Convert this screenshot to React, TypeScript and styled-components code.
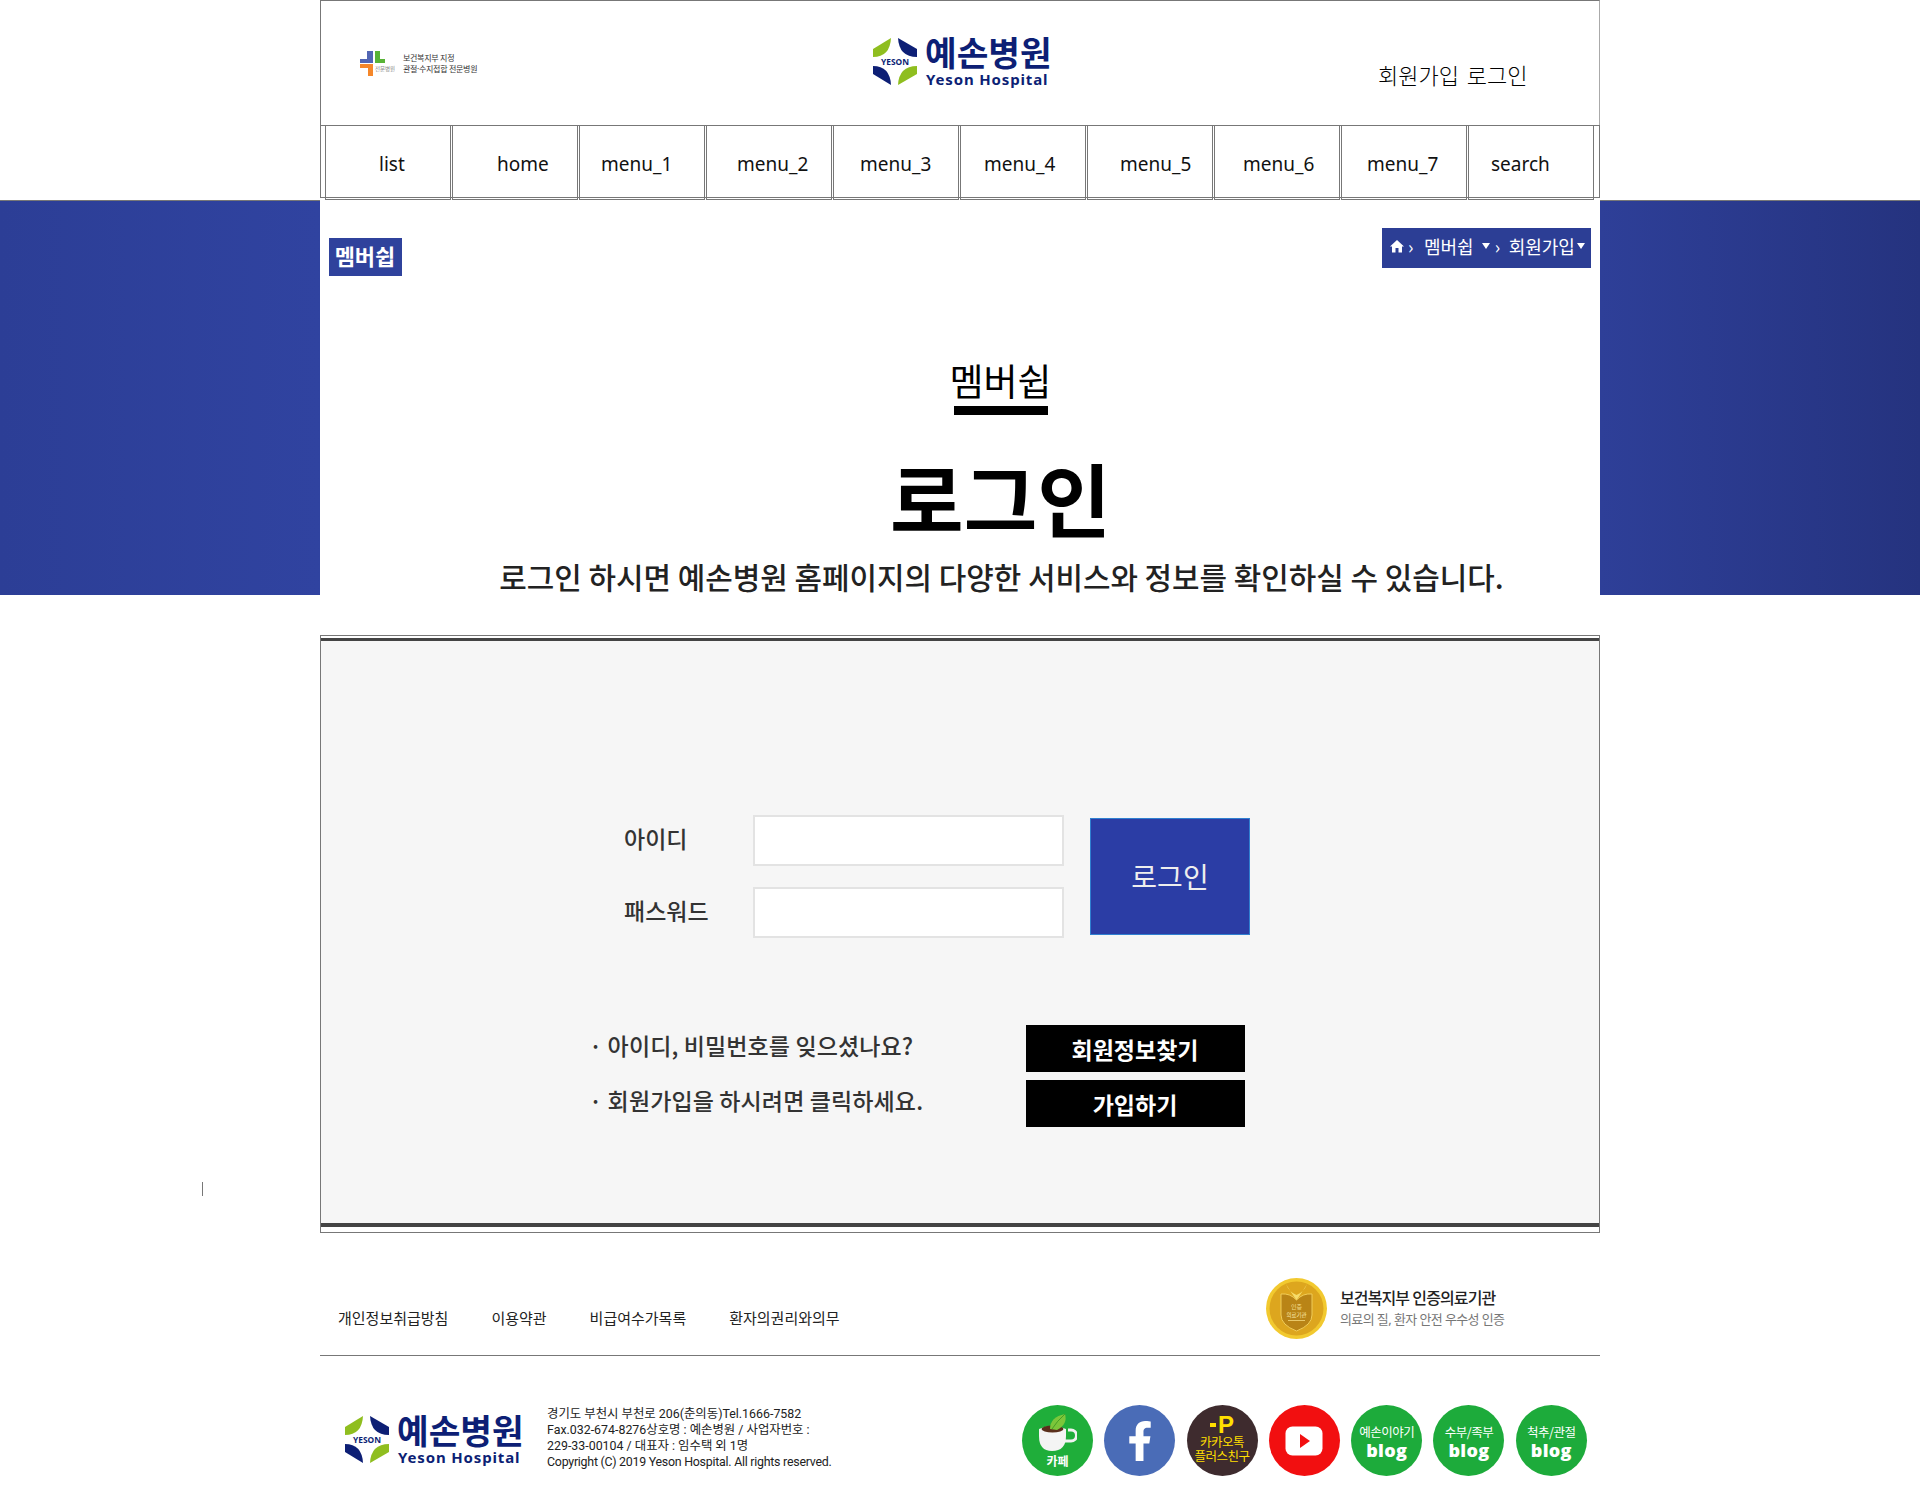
import React from 'react';
import styled, { createGlobalStyle } from 'styled-components';
import { FaFacebookF } from 'react-icons/fa';

const GlobalStyle = createGlobalStyle`
  html, body {
    margin: 0;
    padding: 0;
    background: #fff;
  }
  body {
    font-family: "Noto Sans", "Noto Sans CJK KR", sans-serif;
    color: #000;
  }
  * {
    box-sizing: border-box;
  }
`;

const menus = [
  { label: 'list', pad: 54 },
  { label: 'home', pad: 45 },
  { label: 'menu_1', pad: 22 },
  { label: 'menu_2', pad: 31 },
  { label: 'menu_3', pad: 27 },
  { label: 'menu_4', pad: 24 },
  { label: 'menu_5', pad: 33 },
  { label: 'menu_6', pad: 29 },
  { label: 'menu_7', pad: 26 },
  { label: 'search', pad: 23 },
];

const footerLinks = ['개인정보취급방침', '이용약관', '비급여수가목록', '환자의권리와의무'];

const LogoMark = () => (
  <svg width="46" height="48" viewBox="0 0 46 48">
    <path d="M19 1 L1 12 L1 20 Q18 20 19 1 Z" fill="#8fbe1f" />
    <path d="M26 1 L45 12 L45 20 Q27 20 26 1 Z" fill="#0d1f75" />
    <path d="M1 29 L1 37 L19 48 Q18 29 1 29 Z" fill="#0d1f75" />
    <path d="M45 29 L45 37 L26 48 Q27 29 45 29 Z" fill="#8fbe1f" />
    <text x="23" y="28" textAnchor="middle" fontSize="9.5" fontWeight="700" fill="#0d1f75" textLength="28" lengthAdjust="spacingAndGlyphs">
      YESON
    </text>
  </svg>
);

const HospitalLogo = () => (
  <LogoWrap>
    <LogoMark />
    <LogoText>
      <LogoKo>예손병원</LogoKo>
      <LogoEn>Yeson Hospital</LogoEn>
    </LogoText>
  </LogoWrap>
);

const CrossMark = () => (
  <svg width="36" height="25" viewBox="0 0 36 25">
    <path d="M7 0 H13 V12 H0 V8 H7 Z" fill="#5266b4" />
    <path d="M15 0 H20 V8 H25 V12 H15 Z" fill="#58b336" />
    <path d="M0 13 H13 V25 H8 V17 H0 Z" fill="#f5872a" />
    <text x="25" y="20" textAnchor="middle" fontSize="5.5" fill="#8a8a8a">전문병원</text>
  </svg>
);

const Medal = () => (
  <svg width="61" height="61" viewBox="0 0 61 61">
    <circle cx="30.5" cy="30.5" r="30.5" fill="#f2c92f" />
    <circle cx="30.5" cy="30.5" r="27" fill="#dda61e" />
    <path d="M15 16 Q24 15 30.5 22 Q37 15 46 16 V37 Q46 47 30.5 53 Q15 47 15 37 Z" fill="#b98416" stroke="#f0cc58" strokeWidth="1" />
    <path d="M20 6 Q26 16 30.5 22 Q35 16 41 6 Q38 14 30.5 17 Q23 14 20 6 Z" fill="#f6dc6a" />
    <text x="30.5" y="31" textAnchor="middle" fontSize="6" fill="#f3dc8c">인증</text>
    <text x="30.5" y="39" textAnchor="middle" fontSize="5.5" fill="#f9e9ac">의료기관</text>
    <rect x="22" y="42" width="17" height="1" fill="#e8c868" />
  </svg>
);

const CafeIcon = () => (
  <svg width="38" height="37" viewBox="0 0 38 37">
    <path d="M29 16 h3 a5.5 5.5 0 0 1 0 11 h-6" fill="none" stroke="#f2f2f2" strokeWidth="3" />
    <path d="M0 15 Q13 9 27 15 V22 Q27 37 13 37 Q0 37 0 22 Z" fill="#f4f4f4" />
    <ellipse cx="13.5" cy="15" rx="11" ry="3.5" fill="#5a2f1c" />
    <path d="M11 15 Q11 3 26 0 Q29 10 18 16 Z" fill="#7cc63a" />
    <path d="M26 0 Q18 7 13 15" stroke="#459f25" strokeWidth="1" fill="none" />
  </svg>
);

const YoutubeIcon = () => (
  <svg width="38" height="30" viewBox="0 0 38 30">
    <rect width="37" height="29" x="0.5" y="0.5" rx="7" fill="#fff" />
    <path d="M15 8 L25 15 L15 22 Z" fill="#f20f10" />
  </svg>
);

const HomeIcon = () => (
  <svg width="14" height="14" viewBox="0 0 14 14">
    <path d="M7 1 L14 7.5 H12 V13.5 H8.5 V9 H5.5 V13.5 H2 V7.5 H0 Z" fill="#fff" />
  </svg>
);

export default function App() {
  return (
    <Page>
      <GlobalStyle />
      <StrayMark />
      <Wrapper>
        <Header>
          <SmallLogo>
            <CrossMark />
            <SmallLogoText>
              <span>보건복지부 지정</span>
              <span>관절·수지접합 전문병원</span>
            </SmallLogoText>
          </SmallLogo>
          <CenterLogo>
            <HospitalLogo />
          </CenterLogo>
          <UserLinks>회원가입 로그인</UserLinks>
        </Header>
        <Nav>
          {menus.map((menu) => (
            <NavItem key={menu.label} $pad={menu.pad}>
              {menu.label}
            </NavItem>
          ))}
        </Nav>
      </Wrapper>

      <Hero>
        <Side $from="#2c3e96" $to="#3043a0" />
        <HeroCenter>
          <HeroTop>
            <SectionTag>멤버쉽</SectionTag>
            <Breadcrumb>
              <HomeIcon />
              <Sep $w={20}>›</Sep>
              <Crumb>멤버쉽</Crumb>
              <Caret $gap={8} />
              <Sep $w={18}>›</Sep>
              <Crumb>회원가입</Crumb>
              <Caret $gap={2} />
            </Breadcrumb>
          </HeroTop>
          <HeroTitles>
            <SectionTitle>멤버쉽</SectionTitle>
            <TitleBar />
            <PageTitle>로그인</PageTitle>
            <PageSub>로그인 하시면 예손병원 홈페이지의 다양한 서비스와 정보를 확인하실 수 있습니다.</PageSub>
          </HeroTitles>
        </HeroCenter>
        <Side $from="#2e3f98" $to="#25337f" />
      </Hero>

      <LoginBox>
        <LoginInner>
          <LoginForm>
            <Fields>
              <FieldRow>
                <FieldLabel>아이디</FieldLabel>
                <FieldInput type="text" />
              </FieldRow>
              <FieldRow>
                <FieldLabel>패스워드</FieldLabel>
                <FieldInput type="password" />
              </FieldRow>
            </Fields>
            <LoginButton type="button">로그인</LoginButton>
          </LoginForm>
          <HelpRow>
            <HelpText>· 아이디, 비밀번호를 잊으셨나요?</HelpText>
            <BlackButton type="button">회원정보찾기</BlackButton>
          </HelpRow>
          <HelpRow>
            <HelpText>· 회원가입을 하시려면 클릭하세요.</HelpText>
            <BlackButton type="button">가입하기</BlackButton>
          </HelpRow>
        </LoginInner>
      </LoginBox>

      <Footer>
        <FooterTop>
          <FooterLinks>
            {footerLinks.map((link) => (
              <FooterLink key={link}>{link}</FooterLink>
            ))}
          </FooterLinks>
          <Cert>
            <Medal />
            <CertText>
              <CertTitle>보건복지부 인증의료기관</CertTitle>
              <CertSub>의료의 질, 환자 안전 우수성 인증</CertSub>
            </CertText>
          </Cert>
        </FooterTop>
        <FooterBottom>
          <FooterLogo>
            <HospitalLogo />
          </FooterLogo>
          <Address>
            경기도 부천시 부천로 206(춘의동)Tel.1666-7582
            <br />
            Fax.032-674-8276상호명 : 예손병원 / 사업자번호 :
            <br />
            229-33-00104 / 대표자 : 임수택 외 1명
            <br />
            <Copyright>Copyright (C) 2019 Yeson Hospital. All rights reserved.</Copyright>
          </Address>
          <Socials>
            <Social $bg="#1fae3a">
              <CafeIcon />
              <CafeLabel>카페</CafeLabel>
            </Social>
            <Social $bg="#4a6cb7">
              <FaFacebookF size={40} color="#fff" />
            </Social>
            <Social $bg="#3e2b2e">
              <KakaoP>
                <KakaoDash />P
              </KakaoP>
              <KakaoLabel>
                카카오톡
                <br />
                플러스친구
              </KakaoLabel>
            </Social>
            <Social $bg="#f20f10">
              <YoutubeIcon />
            </Social>
            <Social $bg="#1dab3b">
              <BlogLabel>예손이야기</BlogLabel>
              <BlogWord>blog</BlogWord>
            </Social>
            <Social $bg="#1dab3b">
              <BlogLabel>수부/족부</BlogLabel>
              <BlogWord>blog</BlogWord>
            </Social>
            <Social $bg="#1dab3b">
              <BlogLabel>척추/관절</BlogLabel>
              <BlogWord>blog</BlogWord>
            </Social>
          </Socials>
        </FooterBottom>
      </Footer>
    </Page>
  );
}

const Page = styled.div`
  position: relative;
  width: 1920px;
  height: 1503px;
  overflow: hidden;
`;

const StrayMark = styled.div`
  position: absolute;
  left: 202px;
  top: 1182px;
  width: 1px;
  height: 14px;
  background: #777;
`;

const Wrapper = styled.div`
  width: 1280px;
  height: 200px;
  margin: 0 auto;
`;

const Header = styled.header`
  display: grid;
  grid-template-columns: 551px 506px 1fr;
  height: 125px;
  border: 1px solid #777;
  border-right-color: #aaa;
  border-bottom: 0;
`;

const SmallLogo = styled.div`
  display: flex;
  gap: 7px;
  padding: 50px 0 0 39px;
`;

const SmallLogoText = styled.div`
  display: flex;
  flex-direction: column;
  gap: 1px;
  padding-top: 2px;
  font-size: 8px;
  line-height: 10px;
  letter-spacing: -0.3px;
  color: #333;
  white-space: nowrap;
`;

const CenterLogo = styled.div`
  padding-top: 36px;
`;

const LogoWrap = styled.div`
  display: flex;
  gap: 8px;
`;

const LogoText = styled.div`
  display: flex;
  flex-direction: column;
  width: 124px;
`;

const LogoKo = styled.span`
  margin: -3px 0 2px -1px;
  font-family: "Noto Sans CJK KR", sans-serif;
  font-size: 34.4px;
  font-weight: 700;
  line-height: 34px;
  color: #0d1f75;
  white-space: nowrap;
`;

const LogoEn = styled.span`
  font-family: "Noto Sans", sans-serif;
  font-size: 15px;
  font-weight: 700;
  line-height: 18px;
  letter-spacing: 0.85px;
  color: #0d1f75;
  white-space: nowrap;
`;

const UserLinks = styled.div`
  padding-top: 58px;
  font-family: "Noto Sans CJK KR", sans-serif;
  font-size: 22px;
  font-weight: 300;
  line-height: 30px;
  word-spacing: 3px;
  color: #000;
  white-space: nowrap;
`;

const Nav = styled.nav`
  display: flex;
  gap: 1px;
  height: 73px;
  padding-left: 4px;
  border: 1px solid #777;
`;

const NavItem = styled.div<{ $pad: number }>`
  flex: none;
  width: 126px;
  height: 75px;
  margin-top: -1px;
  padding-top: 1px;
  padding-left: ${(p) => p.$pad - 1}px;
  border: 1px solid #777;
  font-size: 19px;
  line-height: 75px;
  color: #111;
`;

const Hero = styled.section`
  display: flex;
  height: 395px;
`;

const Side = styled.div<{ $from: string; $to: string }>`
  flex: none;
  width: 320px;
  border-top: 1px solid #777;
  background: linear-gradient(90deg, ${(p) => p.$from}, ${(p) => p.$to});
`;

const HeroCenter = styled.div`
  display: flex;
  flex-direction: column;
  width: 1280px;
`;

const HeroTop = styled.div`
  display: flex;
  justify-content: space-between;
  align-items: flex-start;
  width: 100%;
  height: 159px;
  padding: 28px 9px 0 8.5px;
`;

const HeroTitles = styled.div`
  display: flex;
  flex-direction: column;
  align-items: center;
  padding-left: 81px;
`;

const SectionTag = styled.div`
  margin-top: 10px;
  width: 73px;
  height: 38px;
  background: #2f429c;
  font-family: "Noto Sans CJK KR", sans-serif;
  font-size: 22px;
  font-weight: 700;
  line-height: 35px;
  text-align: center;
  color: #fff;
`;

const Breadcrumb = styled.div`
  display: flex;
  align-items: center;
  width: 209px;
  height: 40px;
  padding: 0 0 5px 8px;
  background: #2c3e95;
  font-family: "Noto Sans CJK KR", sans-serif;
  font-size: 18px;
  line-height: 34px;
  color: #fff;
`;

const Sep = styled.span<{ $w: number }>`
  flex: none;
  width: ${(p) => p.$w}px;
  padding-left: 4px;
  font-size: 18px;
`;

const Crumb = styled.span`
  white-space: nowrap;
`;

const Caret = styled.i<{ $gap: number }>`
  flex: none;
  width: 0;
  height: 0;
  margin-left: ${(p) => p.$gap}px;
  margin-right: 1px;
  border-top: 6px solid #fff;
  border-left: 4.5px solid transparent;
  border-right: 4.5px solid transparent;
`;

const SectionTitle = styled.h2`
  margin: 0;
  font-family: "Noto Sans CJK KR", sans-serif;
  font-size: 37px;
  font-weight: 400;
  line-height: 42px;
  color: #000;
`;

const TitleBar = styled.div`
  width: 94px;
  height: 9px;
  margin-top: 5px;
  background: #000;
`;

const PageTitle = styled.h1`
  margin: 41px 0 0;
  font-family: "Noto Sans CJK KR", sans-serif;
  font-size: 80px;
  font-weight: 700;
  line-height: 80px;
  color: #000;
`;

const PageSub = styled.p`
  margin: 23px 0 0 2px;
  font-family: "Noto Sans CJK KR", sans-serif;
  font-size: 29.9px;
  font-weight: 500;
  line-height: 34px;
  color: #222;
  white-space: nowrap;
`;

const LoginBox = styled.section`
  width: 1280px;
  height: 598px;
  margin: 40px auto 0;
  padding: 2px 0 5px;
  border: 1px solid #777;
`;

const LoginInner = styled.div`
  height: 100%;
  padding: 174px 0 0 271px;
  border-top: 3px solid #444;
  border-bottom: 4px solid #444;
  background: #f6f6f6;
`;

const LoginForm = styled.form`
  display: flex;
  margin-left: 32px;
  margin-bottom: 87px;
`;

const Fields = styled.div`
  display: flex;
  flex-direction: column;
  gap: 21px;
`;

const FieldRow = styled.div`
  display: flex;
  align-items: center;
`;

const FieldLabel = styled.label`
  width: 129px;
  margin-top: -5px;
  font-family: "Noto Sans CJK KR", sans-serif;
  font-size: 23px;
  font-weight: 500;
  color: #333;
`;

const FieldInput = styled.input`
  width: 311px;
  height: 51px;
  border: 2px solid #e3e3e3;
  background: #fff;
  outline: none;
`;

const LoginButton = styled.button`
  width: 160px;
  height: 117px;
  margin: 3px 0 0 26px;
  padding: 0 0 2px;
  border: 1px solid #2f7fd0;
  background: #2b3da5;
  font-family: "Noto Sans CJK KR", sans-serif;
  font-size: 28px;
  color: #eee;
`;

const HelpRow = styled.div`
  display: flex;
  align-items: center;
  margin-bottom: 8px;
`;

const HelpText = styled.div`
  flex: none;
  width: 433px;
  margin-top: -7px;
  margin-left: -3px;
  font-family: "Noto Sans CJK KR", sans-serif;
  font-size: 23px;
  font-weight: 500;
  letter-spacing: 0.12px;
  color: #333;
  white-space: nowrap;
`;

const BlackButton = styled.button`
  width: 219px;
  height: 47px;
  margin-left: 3.5px;
  padding: 0;
  border: 0;
  background: #000;
  font-family: "Noto Sans CJK KR", sans-serif;
  font-size: 23px;
  font-weight: 700;
  color: #fff;
`;

const Footer = styled.footer`
  width: 1280px;
  margin: 0 auto;
`;

const FooterTop = styled.div`
  display: flex;
  justify-content: space-between;
  height: 123px;
  border-bottom: 1px solid #777;
`;

const FooterLinks = styled.div`
  display: flex;
  gap: 43px;
  height: 22px;
  margin: 74px 0 0 18px;
`;

const FooterLink = styled.span`
  font-size: 15px;
  line-height: 22px;
  color: #222;
  white-space: nowrap;
`;

const Cert = styled.div`
  display: flex;
  gap: 13px;
  width: 334px;
  height: 61px;
  margin-top: 45px;
`;

const CertText = styled.div`
  display: flex;
  flex-direction: column;
  gap: 2px;
  padding-top: 10px;
`;

const CertTitle = styled.span`
  font-size: 16px;
  font-weight: 500;
  line-height: 20px;
  letter-spacing: -0.9px;
  color: #222;
  white-space: nowrap;
`;

const CertSub = styled.span`
  font-size: 13px;
  line-height: 18px;
  letter-spacing: -0.6px;
  color: #777;
  white-space: nowrap;
`;

const FooterBottom = styled.div`
  display: flex;
  padding: 49px 0 0 24px;
`;

const FooterLogo = styled.div`
  width: 203px;
  padding-top: 10px;
`;

const Address = styled.div`
  width: 475px;
  margin-top: 1px;
  font-family: Roboto, "Noto Sans CJK KR", sans-serif;
  font-size: 12.4px;
  line-height: 16px;
  color: #222;
  white-space: nowrap;
`;

const Copyright = styled.span`
  letter-spacing: -0.25px;
`;

const Socials = styled.div`
  display: flex;
  gap: 11.3px;
`;

const Social = styled.div<{ $bg: string }>`
  display: flex;
  flex: none;
  flex-direction: column;
  align-items: center;
  justify-content: center;
  width: 71px;
  height: 71px;
  border-radius: 50%;
  background: ${(p) => p.$bg};
  color: #fff;
`;

const CafeLabel = styled.span`
  margin-top: 3px;
  font-family: "Noto Sans CJK KR", sans-serif;
  font-size: 12px;
  font-weight: 700;
  line-height: 14px;
`;

const KakaoP = styled.span`
  display: flex;
  align-items: center;
  gap: 2px;
  font-family: "Liberation Sans", sans-serif;
  font-size: 24px;
  font-weight: 700;
  line-height: 21px;
  color: #ffdf00;
`;

const KakaoDash = styled.i`
  width: 6px;
  height: 4px;
  background: #ffdf00;
`;

const KakaoLabel = styled.span`
  margin-bottom: 4px;
  font-family: "Noto Sans CJK KR", sans-serif;
  font-size: 12.5px;
  line-height: 14px;
  letter-spacing: -0.5px;
  text-align: center;
  color: #ffdf00;
  white-space: nowrap;
`;

const BlogLabel = styled.span`
  margin-top: 2px;
  font-family: "Noto Sans CJK KR", sans-serif;
  font-size: 12.5px;
  line-height: 16px;
  letter-spacing: -0.5px;
  white-space: nowrap;
`;

const BlogWord = styled.span`
  font-family: "Open Sans", sans-serif;
  font-size: 18px;
  font-weight: 800;
  line-height: 20px;
  letter-spacing: 0.3px;
`;
